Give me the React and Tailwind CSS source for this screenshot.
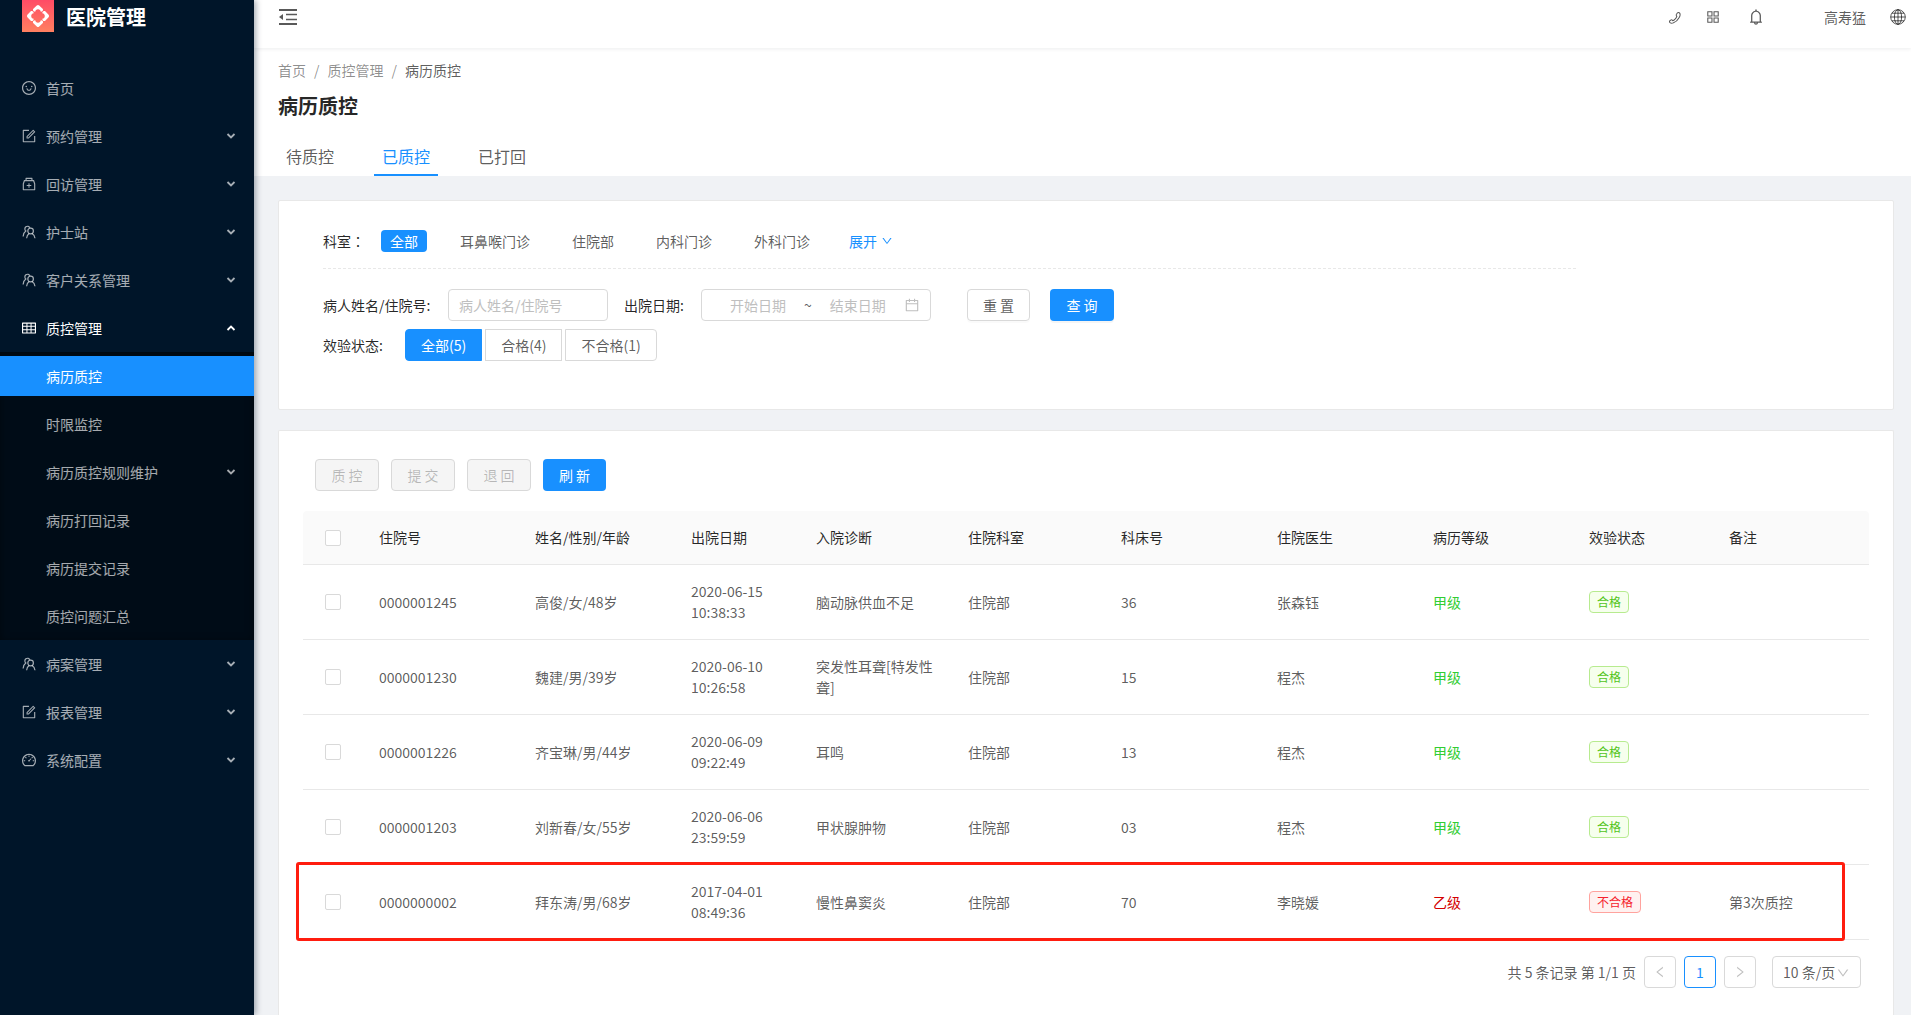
import { useState } from 'react';
import {
  AiOutlineSmile,
  AiOutlineForm,
  AiOutlineMedicineBox,
  AiOutlineTable,
  AiOutlineDashboard,
  AiOutlineDown,
  AiOutlineLeft,
  AiOutlineRight,
  AiOutlineCalendar,
  AiOutlineBell,
  AiOutlineAppstore,
} from 'react-icons/ai';

function TeamIcon() {
  return (
    <svg viewBox="-1 -1 16 16" className="size-4" fill="none" stroke="currentColor" strokeWidth="1.2">
      <path d="M8 2.800A2.700 2.700 0 1 0 3.800 6C2.300 7 1.300 8.800 1.100 11.500" />
      <circle cx="8.600" cy="6" r="2.800" />
      <path d="M7.200 8.500C5.700 9.400 4.800 10.900 4.600 13.200M10 8.500c1.700.9 2.800 2.400 3 4.700" />
    </svg>
  );
}

function PhoneIcon() {
  return (
    <svg viewBox="-1 -2 16 16" className="size-[14px]" fill="none" stroke="currentColor" strokeWidth="1.2">
      <path d="M9.800 1.200c.7-.6 1.900-.4 2.500.4.800 1.100.6 3-.5 4.900C10.300 9.300 7.900 11.700 5.200 12.700c-1.500.6-3 .5-3.900-.3-.7-.6-.8-1.500-.2-2.100l1-.8c.6-.4 1.300-.3 1.800.2l.5.5c1.500-.4 4.100-3 4.700-4.900l-.4-.6c-.4-.6-.3-1.300.100-1.800z" />
    </svg>
  );
}

function GlobeIcon() {
  return (
    <svg viewBox="0 0 16 16" className="size-4" fill="none" stroke="currentColor">
      <circle cx="8" cy="8" r="7.300" />
      <ellipse cx="8" cy="8" rx="3.600" ry="7.300" />
      <path d="M8 .7v14.600M.7 8h14.600M2 4.200h12M2 11.800h12" />
    </svg>
  );
}

function FoldIcon() {
  return (
    <svg viewBox="0 0 18 16" className="h-4 w-[18px]" fill="none" stroke="currentColor" strokeWidth="2">
      <path d="M0 1h18M0 15h18" />
      <path d="M7 5.500h11M7 10.500h11" strokeWidth="1.500" />
      <path d="M0 8l4-3v6z" fill="currentColor" stroke="none" />
    </svg>
  );
}

function MenuArrow({ up }) {
  return (
    <svg viewBox="0 0 10 10" className={`size-[10px] ${up ? 'rotate-180' : ''}`} fill="none" stroke="currentColor" strokeWidth="1.800">
      <path d="M1.500 3L5 6.500 8.500 3" />
    </svg>
  );
}

const petal = 'M14.800 5.400Q16 4.400 17.200 5.400L20.900 9C21.500 10.500 20.600 11.600 18.800 11.700 18.600 10.100 17.500 9.200 16 9.200S13.400 10.100 13.200 11.700C11.400 11.600 10.500 10.500 11.100 9Z';

function Logo() {
  return (
    <svg viewBox="0 0 32 32" className="size-8">
      <defs>
        <linearGradient id="logo-bg" x1="0" y1="0" x2="0" y2="1">
          <stop offset="0" stopColor="#ff4b66" />
          <stop offset="1" stopColor="#ff8060" />
        </linearGradient>
      </defs>
      <path fill="url(#logo-bg)" d="M0 0h32v32H0z" />
      <g fill="#fff">
        <path d={petal} />
        <path d={petal} transform="rotate(90 16 16)" />
        <path d={petal} transform="rotate(180 16 16)" />
        <path d={petal} transform="rotate(270 16 16)" />
      </g>
    </svg>
  );
}

const menu = [
  { label: '首页', icon: AiOutlineSmile, leaf: true },
  { label: '预约管理', icon: AiOutlineForm },
  { label: '回访管理', icon: AiOutlineMedicineBox },
  { label: '护士站', icon: TeamIcon },
  { label: '客户关系管理', icon: TeamIcon },
  {
    label: '质控管理',
    icon: AiOutlineTable,
    children: [
      { label: '病历质控', active: true },
      { label: '时限监控' },
      { label: '病历质控规则维护', nested: true },
      { label: '病历打回记录' },
      { label: '病历提交记录' },
      { label: '质控问题汇总' },
    ],
  },
  { label: '病案管理', icon: TeamIcon },
  { label: '报表管理', icon: AiOutlineForm },
  { label: '系统配置', icon: AiOutlineDashboard },
];

const departments = ['全部', '耳鼻喉门诊', '住院部', '内科门诊', '外科门诊'];

const statuses = [
  { key: 'all', label: '全部(5)', shape: 'rounded-l' },
  { key: 'pass', label: '合格(4)', shape: '' },
  { key: 'fail', label: '不合格(1)', shape: 'rounded-r' },
];

const columns = [
  { title: '住院号', width: 'w-[156px]' },
  { title: '姓名/性别/年龄', width: 'w-[156px]' },
  { title: '出院日期', width: 'w-[125px]' },
  { title: '入院诊断', width: 'w-[152px]' },
  { title: '住院科室', width: 'w-[153px]' },
  { title: '科床号', width: 'w-[156px]' },
  { title: '住院医生', width: 'w-[156px]' },
  { title: '病历等级', width: 'w-[156px]' },
  { title: '效验状态', width: 'w-[140px]' },
  { title: '备注', width: 'w-[156px]' },
];

const rows = [
  { id: '0000001245', patient: '高俊/女/48岁', day: '2020-06-15', time: '10:38:33', diagnosis: '脑动脉供血不足', bed: '36', doctor: '张森钰', grade: '甲级', pass: true },
  { id: '0000001230', patient: '魏建/男/39岁', day: '2020-06-10', time: '10:26:58', diagnosis: '突发性耳聋[特发性聋]', bed: '15', doctor: '程杰', grade: '甲级', pass: true },
  { id: '0000001226', patient: '齐宝琳/男/44岁', day: '2020-06-09', time: '09:22:49', diagnosis: '耳鸣', bed: '13', doctor: '程杰', grade: '甲级', pass: true },
  { id: '0000001203', patient: '刘新春/女/55岁', day: '2020-06-06', time: '23:59:59', diagnosis: '甲状腺肿物', bed: '03', doctor: '程杰', grade: '甲级', pass: true },
  { id: '0000000002', patient: '拜东涛/男/68岁', day: '2017-04-01', time: '08:49:36', diagnosis: '慢性鼻窦炎', bed: '70', doctor: '李晓媛', grade: '乙级', pass: false, note: '第3次质控' },
];

function Sidebar() {
  return (
    <aside className="relative z-10 w-[254px] shrink-0 bg-[#001529] text-white/65 shadow-[2px_0_6px_rgba(0,21,41,0.35)]">
      <div className="flex h-16 items-start pl-[22px]">
        <Logo />
        <h1 className="ml-3 text-xl leading-[34px] font-bold text-white">医院管理</h1>
      </div>
      <nav>
        <ul>
          {menu.map(({ label, icon: Icon, leaf, children }) => (
            <li key={label}>
              <a href="#" className={`flex h-12 items-center pr-[18px] pl-[21px] ${children ? 'text-white' : ''}`}>
                <Icon className="size-4" />
                <span className="ml-[9px] flex-1">{label}</span>
                {!leaf && <MenuArrow up={Boolean(children)} />}
              </a>
              {children && (
                <ul className="bg-[#000c17] shadow-[inset_0_2px_8px_rgba(0,0,0,0.45)]">
                  {children.map((item) => (
                    <li key={item.label} className="py-1">
                      <a href="#" className={`flex h-10 items-center pr-[18px] pl-[46px] ${item.active ? 'bg-[#1890ff] text-white' : ''}`}>
                        <span className="flex-1">{item.label}</span>
                        {item.nested && <MenuArrow />}
                      </a>
                    </li>
                  ))}
                </ul>
              )}
            </li>
          ))}
        </ul>
      </nav>
    </aside>
  );
}

function TopBar() {
  return (
    <header className="relative flex h-12 items-start justify-between bg-white pt-[9px] pr-[5px] pl-[25px] shadow-[0_1px_4px_rgba(0,21,41,0.08)]">
      <button aria-label="收起菜单">
        <FoldIcon />
      </button>
      <div className="flex h-4 items-center">
        <button aria-label="电话"><PhoneIcon /></button>
        <button aria-label="应用" className="ml-[23px]"><AiOutlineAppstore className="size-4" /></button>
        <button aria-label="通知" className="ml-[26px]"><AiOutlineBell className="size-[18px]" /></button>
        <span className="ml-[59px]">高寿猛</span>
        <button aria-label="语言" className="ml-6"><GlobeIcon /></button>
      </div>
    </header>
  );
}

function PageHeader() {
  const [tab, setTab] = useState('已质控');

  return (
    <div className="bg-white px-6 pt-3">
      <nav className="flex gap-2 leading-5 text-black/45">
        <a href="#">首页</a>
        <span>/</span>
        <a href="#">质控管理</a>
        <span>/</span>
        <span className="text-black/65">病历质控</span>
      </nav>
      <h2 className="mt-[10px] text-xl leading-8 font-bold text-black/85">病历质控</h2>
      <div className="mt-4 flex gap-8">
        {['待质控', '已质控', '已打回'].map((name) => (
          <button
            key={name}
            onClick={() => setTab(name)}
            className={`h-[38px] border-b-2 px-2 text-base ${tab === name ? 'border-[#1890ff] text-[#1890ff]' : 'border-transparent'}`}
          >
            {name}
          </button>
        ))}
      </div>
    </div>
  );
}

function FilterCard() {
  const [department, setDepartment] = useState('全部');
  const [status, setStatus] = useState('all');

  return (
    <section className="h-[210px] rounded-xs border border-[#e8e8e8] bg-white px-11 pt-[29px]">
      <div className="flex h-[39px] max-w-[1253px] items-start border-b border-dashed border-[#e8e8e8] leading-[22px]">
        <span className="w-[58px] text-black/85">
          科室<span className="font-['Noto_Sans_CJK_TC',sans-serif]">：</span>
        </span>
        <div className="flex gap-6">
          {departments.map((name) => (
            <button
              key={name}
              onClick={() => setDepartment(name)}
              className={`rounded px-[9px] ${department === name ? 'bg-[#1890ff] text-white' : ''}`}
            >
              {name}
            </button>
          ))}
        </div>
        <a href="#" className="ml-[30px] flex items-center gap-1 text-[#1890ff]">
          展开
          <AiOutlineDown className="size-3" />
        </a>
      </div>
      <form className="mt-5 flex items-center" onSubmit={(e) => e.preventDefault()}>
        <label htmlFor="patient" className="w-[125px] text-black/85">病人姓名/住院号:</label>
        <input id="patient" placeholder="病人姓名/住院号" className="h-8 w-40 rounded border border-[#d9d9d9] px-[10px] placeholder:text-[#bfbfbf]" />
        <label htmlFor="start" className="ml-4 w-[77px] text-black/85">出院日期:</label>
        <div className="flex h-8 w-[230px] items-center rounded border border-[#d9d9d9] pr-3 pl-[10px]">
          <input id="start" placeholder="开始日期" className="w-[92px] text-center placeholder:text-[#bfbfbf]" />
          <span className="w-2 text-center">~</span>
          <input aria-label="结束日期" placeholder="结束日期" className="w-[92px] text-center placeholder:text-[#bfbfbf]" />
          <AiOutlineCalendar className="size-4 shrink-0 text-[#bfbfbf]" />
        </div>
        <button type="reset" className="ml-9 h-8 w-[63px] rounded border border-[#d9d9d9] shadow-[0_2px_0_rgba(0,0,0,0.02)]">重 置</button>
        <button className="ml-5 h-8 w-16 rounded bg-[#1890ff] text-white shadow-[0_2px_0_rgba(0,0,0,0.04)]">查 询</button>
      </form>
      <fieldset className="mt-2 flex items-center">
        <span className="w-[82px] text-black/85">效验状态:</span>
        <div className="flex gap-[3px]">
          {statuses.map(({ key, label, shape }) => (
            <label
              key={key}
              className={`relative flex h-8 items-center border px-[15px] ${shape} ${status === key ? 'border-[#1890ff] bg-[#1890ff] text-white' : 'border-[#d9d9d9]'}`}
            >
              <input type="radio" name="status" className="sr-only" checked={status === key} onChange={() => setStatus(key)} />
              {label}
            </label>
          ))}
        </div>
      </fieldset>
    </section>
  );
}

function Check({ label }) {
  return (
    <input
      type="checkbox"
      aria-label={label}
      className="block size-4 appearance-none rounded-xs border border-[#d9d9d9] bg-white checked:border-[#1890ff] checked:bg-[#1890ff]"
    />
  );
}

function StatusTag({ pass }) {
  const tone = pass ? 'border-[#b7eb8f] bg-[#f6ffed] text-[#52c41a]' : 'border-[#ffa39e] bg-[#fff1f0] text-[#f5222d]';
  return <span className={`block w-fit rounded border px-[7px] text-xs leading-5 ${tone}`}>{pass ? '合格' : '不合格'}</span>;
}

function RecordTable() {
  return (
    <div className="relative mt-5">
      <table className="w-full table-fixed border-separate border-spacing-0 text-left">
        <thead className="text-black/85">
          <tr>
            <th className="w-[60px] rounded-tl border-b border-[#e8e8e8] bg-[#fafafa] px-[22px]"><Check label="全选" /></th>
            {columns.map(({ title, width }) => (
              <th key={title} className={`border-b border-[#e8e8e8] bg-[#fafafa] p-4 font-normal last:rounded-tr ${width}`}>{title}</th>
            ))}
          </tr>
        </thead>
        <tbody className="[&_td]:border-b [&_td]:border-[#e8e8e8] [&_td]:px-4">
          {rows.map((row) => (
            <tr key={row.id} className="h-[75px]">
              <td><div className="flex justify-center"><Check label={row.id} /></div></td>
              <td>{row.id}</td>
              <td>{row.patient}</td>
              <td>{row.day}<br />{row.time}</td>
              <td>{row.diagnosis}</td>
              <td>住院部</td>
              <td>{row.bed}</td>
              <td>{row.doctor}</td>
              <td className={row.pass ? 'text-[#32cd32]' : 'text-[#d40000]'}>{row.grade}</td>
              <td><StatusTag pass={row.pass} /></td>
              <td>{row.note}</td>
            </tr>
          ))}
        </tbody>
      </table>
      {/* marks the record that failed the check */}
      <div className="pointer-events-none absolute right-6 -bottom-px -left-[7px] h-[79px] rounded-[3px] border-3 border-[#ff1d0f]" />
    </div>
  );
}

function Pagination() {
  return (
    <div className="mt-4 mr-2 flex items-center justify-end gap-2">
      <span>共 5 条记录 第 1/1 页</span>
      <button aria-label="上一页" disabled className="flex size-8 items-center justify-center rounded border border-[#d9d9d9] text-black/25">
        <AiOutlineLeft className="size-[14px]" />
      </button>
      <button className="size-8 rounded border border-[#1890ff] text-[#1890ff]">1</button>
      <button aria-label="下一页" disabled className="flex size-8 items-center justify-center rounded border border-[#d9d9d9] text-black/25">
        <AiOutlineRight className="size-[14px]" />
      </button>
      <div className="relative ml-2">
        <select aria-label="每页条数" className="h-8 w-[89px] appearance-none rounded border border-[#d9d9d9] bg-white pl-[10px]">
          <option>10 条/页</option>
          <option>20 条/页</option>
        </select>
        <AiOutlineDown className="pointer-events-none absolute top-[10px] right-[11px] size-[14px] text-black/25" />
      </div>
    </div>
  );
}

export default function App() {
  return (
    <div className="flex min-h-screen bg-[#f0f2f5] font-['Noto_Sans_CJK_SC',sans-serif] text-sm leading-[21px] text-black/65">
      <Sidebar />
      <div className="flex min-w-0 flex-1 flex-col">
        <TopBar />
        <PageHeader />
        <main className="flex flex-1 flex-col gap-5 pt-6 pr-[17px] pl-6">
          <FilterCard />
          <section className="flex-1 rounded-t-xs border border-b-0 border-[#e8e8e8] bg-white px-6 pt-7">
            <div className="flex gap-3 pl-3">
              {['质 控', '提 交', '退 回'].map((text) => (
                <button key={text} disabled className="h-8 w-16 rounded border border-[#d9d9d9] bg-[#f5f5f5] text-black/25">{text}</button>
              ))}
              <button className="h-8 w-[63px] rounded bg-[#1890ff] text-white">刷 新</button>
            </div>
            <RecordTable />
            <Pagination />
          </section>
        </main>
      </div>
    </div>
  );
}
